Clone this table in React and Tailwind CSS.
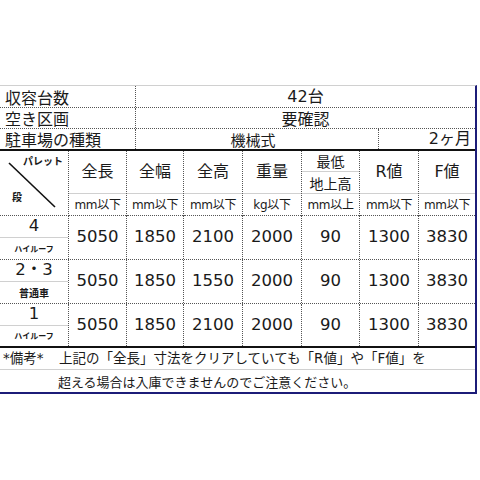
export default function App() {
  const cols = [
    { w: "w-[58px] border-r border-dotted border-r-[#555]", name: "全長", unit: "mm以下" },
    { w: "w-[57px] border-r border-dotted border-r-[#555]", name: "全幅", unit: "mm以下" },
    { w: "w-[59px] border-r border-dotted border-r-[#555]", name: "全高", unit: "mm以下" },
    { w: "w-[59px] border-r border-dotted border-r-[#555]", name: "重量", unit: "kg以下" },
    { w: "w-[58px] border-r border-dotted border-r-[#555]", name: null, unit: "mm以上" },
    { w: "w-[59px] border-r border-dotted border-r-[#555]", name: "R値", unit: "mm以下" },
    { w: "flex-1", name: "F値", unit: "mm以下" },
  ];
  const rows = [
    { dan: "4", sub: "ハイルーフ", subCls: "text-[8px]", vals: ["5050", "1850", "2100", "2000", "90", "1300", "3830"], bottom: "h-[44px] border-b border-dotted border-b-[#555]" },
    { dan: "2・3", sub: "普通車", subCls: "text-[10px]", vals: ["5050", "1850", "1550", "2000", "90", "1300", "3830"], bottom: "h-[44px] border-b border-dotted border-b-[#555]" },
    { dan: "1", sub: "ハイルーフ", subCls: "text-[8px]", vals: ["5050", "1850", "2100", "2000", "90", "1300", "3830"], bottom: "h-[44px] border-b-2 border-solid border-b-[#111]" },
  ];
  const jp = "font-['Noto_Sans_CJK_JP',sans-serif]";
  const num = "font-['DejaVu_Sans','Noto_Sans_CJK_JP',sans-serif]";
  return (
    <div className={`w-[480px] h-[480px] bg-white text-[#1a1a1a] ${jp}`}>
      <div className="pt-[85px]">
        <div className="w-[477px] border-t border-t-[#d0d0d0] border-r-2 border-r-[#1c1c78] border-b-2 border-b-[#1c1c78]">
          {/* top section */}
          <div className="flex h-[22px] border-b border-dotted border-b-[#555]">
            <div className="w-[136px] border-r border-dotted border-r-[#555] pl-[5px] flex items-center text-[16px] leading-none">収容台数</div>
            <div className={`flex-1 flex items-center justify-center text-[16px] leading-none ${num}`}>42台</div>
          </div>
          <div className="flex h-[21px] border-b border-dotted border-b-[#555]">
            <div className="w-[136px] border-r border-dotted border-r-[#555] pl-[5px] flex items-center text-[16px] leading-none">空き区画</div>
            <div className="flex-1 flex items-center justify-center text-[16px] leading-none">要確認</div>
          </div>
          <div className="flex h-[22px] border-b-2 border-b-[#111]">
            <div className="w-[136px] border-r border-dotted border-r-[#555] pl-[5px] flex items-center text-[16px] leading-none">駐車場の種類</div>
            <div className="w-[243px] border-r border-dotted border-r-[#555] flex items-center justify-center pr-[8px] text-[15px] leading-none">機械式</div>
            <div className={`flex-1 flex items-center justify-end pr-[4px] text-[16px] leading-none ${num}`}>2ヶ月</div>
          </div>
          {/* header */}
          <div className="flex">
            <div className="relative w-[69px] h-[65px] border-r border-dotted border-r-[#555] border-b border-b-[#555]">
              <svg className="absolute left-0 top-0" width="68" height="64" viewBox="0 0 68 64">
                <line x1="9" y1="12" x2="55" y2="56" stroke="#111" strokeWidth="1.6" />
              </svg>
              <span className="absolute left-[23px] top-[5px] text-[10px] font-bold leading-none">パレット</span>
              <span className="absolute left-[12px] top-[41px] text-[10px] font-bold leading-none">段</span>
            </div>
            {cols.map((c, i) => (
              <div key={i} className={`${c.w} flex flex-col`}>
                {c.name ? (
                  <div className={`h-[43px] border-b border-b-[#d0d0d0] flex items-center justify-center text-[16px] leading-none ${num}`}>{c.name}</div>
                ) : (
                  <div className="h-[43px] border-b border-b-[#d0d0d0] flex flex-col">
                    <div className="h-[21px] border-b border-b-[#d0d0d0] flex items-center justify-center text-[14px] leading-none">最低</div>
                    <div className="flex-1 flex items-center justify-center text-[14px] leading-none">地上高</div>
                  </div>
                )}
                <div className={`h-[22px] border-b border-dotted border-b-[#555] flex items-center justify-center text-[12px] leading-none tracking-[-0.3px] ${num}`}>{c.unit}</div>
              </div>
            ))}
          </div>
          {/* data */}
          {rows.map((r, ri) => (
            <div key={ri} className={`flex ${r.bottom}`}>
              <div className="w-[69px] border-r border-dotted border-r-[#555] flex flex-col">
                <div className={`h-[22px] border-b border-b-[#d0d0d0] flex items-center justify-center text-[16.5px] leading-none ${num}`}>{r.dan}</div>
                <div className={`flex-1 flex items-center justify-center font-bold leading-none ${r.subCls}`}>{r.sub}</div>
              </div>
              {cols.map((c, i) => (
                <div key={i} className={`${c.w} flex items-center justify-center text-[16.5px] leading-none ${num}`}>{r.vals[i]}</div>
              ))}
            </div>
          ))}
          {/* remarks */}
          <div className="h-[22px] border-b border-b-[#d0d0d0] flex items-center text-[13.5px] leading-none">
            <span className={`pl-[3px] w-[59px] ${num}`}>*備考*</span>
            <span>上記の「全長」寸法をクリアしていても「<span className={num}>R</span>値」や「<span className={num}>F</span>値」を</span>
          </div>
          <div className="h-[22px] flex items-center pl-[58px] text-[13px] leading-none">超える場合は入庫できませんのでご注意ください。</div>
        </div>
      </div>
    </div>
  );
}
